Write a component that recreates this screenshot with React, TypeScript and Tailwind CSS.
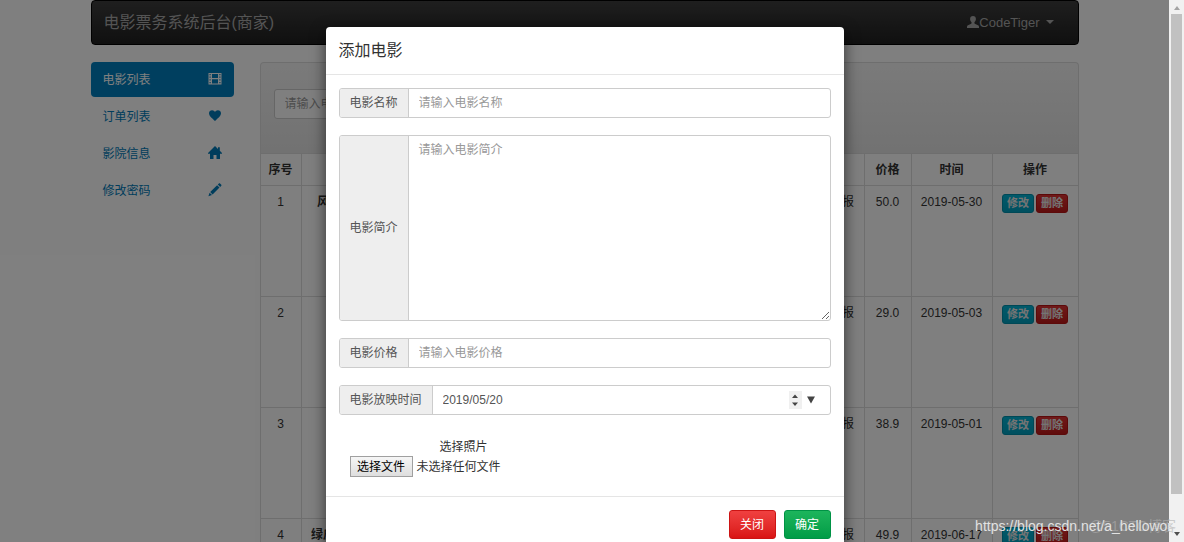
import type { ReactNode } from 'react';

interface Movie {
  id: number;
  name: string;
  price: string;
  date: string;
}

const movies: Movie[] = [
  { id: 1, name: '风暴', price: '50.0', date: '2019-05-30' },
  { id: 2, name: '', price: '29.0', date: '2019-05-03' },
  { id: 3, name: '', price: '38.9', date: '2019-05-01' },
  { id: 4, name: '绿皮书', price: '49.9', date: '2019-06-17' },
];

const FilmIcon = () => (
  <svg className="h-3.5 w-3.5" viewBox="0 0 14 14" fill="currentColor" aria-hidden="true">
    <path
      fillRule="evenodd"
      d="M.5 1h13v11.500H.5zM1.500 2v1.200h1.200V2zm0 2.500v1.200h1.200V4.500zm0 2.700v1.200h1.200V7.200zm0 2.700v1.300h1.200V9.900zM4 2v4h6V2zm0 5.300v4.200h6V7.300zM11.300 2v1.200h1.200V2zm0 2.500v1.200h1.200V4.500zm0 2.700v1.200h1.200V7.200zm0 2.700v1.300h1.200V9.900z"
    />
  </svg>
);

const HeartIcon = () => (
  <svg className="h-3.5 w-3.5" viewBox="0 0 14 14" fill="currentColor" aria-hidden="true">
    <path d="M7 12C4.900 9.700 1 7.200 1 4.200 1 2.400 2.400 1.200 4.100 1.200c1.300 0 2.300.7 2.900 1.900.6-1.200 1.600-1.900 2.900-1.900 1.700 0 3.100 1.200 3.100 3 0 3-3.900 5.500-6 7.800z" />
  </svg>
);

const HomeIcon = () => (
  <svg className="h-3.5 w-3.5" viewBox="0 0 14 14" fill="currentColor" aria-hidden="true">
    <path d="M7 0l3 3V1.300h1.800v3.500L14 7v.8h-2V13H8.500V9h-3v4H2V7.800H0V7z" />
  </svg>
);

const PencilIcon = () => (
  <svg className="h-3.5 w-3.5" viewBox="0 0 14 14" fill="currentColor" aria-hidden="true">
    <path d="M10.900.4c.3-.3.8-.3 1.100 0l1.300 1.300c.3.300.3.800 0 1.100l-1.100 1.100-2.400-2.400zM9.100 2.200l2.400 2.400-6.900 6.900-2.400-2.400zM1.600 9.700l2.400 2.400L.4 13.300z" />
  </svg>
);

const UserIcon = () => (
  <svg className="h-3 w-3" viewBox="0 0 12 12" fill="currentColor" aria-hidden="true">
    <path d="M6 0c1.900 0 2.900 1.200 2.900 3 0 1.400-.6 2.500-1.300 3.100-.3.400-.3 1.400.2 1.700l3.200 1.500c.7.300 1 .8 1 1.500V12H0v-1.200c0-.7.3-1.200 1-1.500l3.200-1.500c.5-.3.500-1.300.2-1.700C3.700 5.500 3.100 4.400 3.100 3c0-1.800 1-3 2.900-3z" />
  </svg>
);

const menu: { label: string; icon: ReactNode; active?: boolean }[] = [
  { label: '电影列表', icon: <FilmIcon />, active: true },
  { label: '订单列表', icon: <HeartIcon /> },
  { label: '影院信息', icon: <HomeIcon /> },
  { label: '修改密码', icon: <PencilIcon /> },
];

const Navbar = () => (
  <nav className="flex h-[45px] items-center justify-between rounded border border-black bg-linear-to-b from-[#3e3e3e] to-[#202020] pr-6 pl-3 text-[#a8a8a8]">
    <a href="#" className="text-base">电影票务系统后台(商家)</a>
    <button type="button" className="flex items-center text-[13px]">
      <UserIcon />
      CodeTiger
      <svg className="ml-1.5 h-1 w-2" viewBox="0 0 8 4" fill="currentColor" aria-hidden="true">
        <path d="M0 0h8L4 4z" />
      </svg>
    </button>
  </nav>
);

const Sidebar = () => (
  <ul className="flex w-[143px] shrink-0 flex-col gap-0.5">
    {menu.map(({ label, icon, active }) => (
      <li key={label}>
        <a
          href="#"
          className={`flex h-[35px] items-center justify-between rounded px-3 ${
            active ? 'bg-[#007fbe] text-white' : 'text-[#007ab8]'
          }`}
        >
          {label}
          <span className="pb-0.5">{icon}</span>
        </a>
      </li>
    ))}
  </ul>
);

const MovieTable = () => (
  <table className="w-full table-fixed border-collapse text-center text-[#333] [&_td]:border [&_td]:border-[#ddd] [&_td]:pt-2 [&_td]:align-top [&_th]:border [&_th]:border-[#ddd]">
    <thead>
      <tr className="h-8">
        <th className="w-[41px]">序号</th>
        <th className="w-14" aria-label="名称"></th>
        <th>简介</th>
        <th className="w-[68px]" aria-label="海报"></th>
        <th className="w-[47px]">价格</th>
        <th className="w-[81px]">时间</th>
        <th className="w-[86px]">操作</th>
      </tr>
    </thead>
    <tbody>
      {movies.map((movie) => (
        <tr key={movie.id} className="h-[111px]">
          <td>{movie.id}</td>
          <td className="font-bold">{movie.name}</td>
          <td></td>
          <td>查看海报</td>
          <td>{movie.price}</td>
          <td>{movie.date}</td>
          <td>
            <div className="flex justify-center gap-0.5 text-[11px] font-bold text-[#e8e8e8]">
              <button type="button" className="h-[19px] w-8 rounded-[3px] border border-[#0090ac] bg-linear-to-b from-[#00b4d6] to-[#009fbe]">
                修改
              </button>
              <button type="button" className="h-[19px] w-8 rounded-[3px] border border-[#b91515] bg-linear-to-b from-[#e03232] to-[#c01818]">
                删除
              </button>
            </div>
          </td>
        </tr>
      ))}
    </tbody>
  </table>
);

interface FieldProps {
  id: string;
  label: string;
  children: ReactNode;
}

const Field = ({ id, label, children }: FieldProps) => (
  <div className="flex min-h-[30px] overflow-hidden rounded-[3px] border border-[#ccc]">
    <label htmlFor={id} className="flex shrink-0 items-center border-r border-[#ccc] bg-[#eee] px-2.5 text-[#555]">
      {label}
    </label>
    {children}
  </div>
);

const AddMovieModal = () => (
  <div className="absolute inset-0 flex items-start justify-center overflow-hidden bg-black/50 pt-[27px]">
    <div role="dialog" aria-label="添加电影" className="w-full max-w-[518px] rounded-t bg-white pb-4 shadow-[0_5px_15px_rgba(0,0,0,0.6)]">
      <div className="flex h-12 items-center border-b border-[#e5e5e5] px-[13px]">
        <h4 className="text-base">添加电影</h4>
      </div>
      <form>
        <div className="flex flex-col gap-[17px] px-[13px] pt-[13px]">
          <Field id="name" label="电影名称">
            <input id="name" type="text" placeholder="请输入电影名称" className="min-w-0 flex-1 px-2.5 placeholder:text-[#999]" />
          </Field>
          <Field id="intro" label="电影简介">
            <textarea id="intro" placeholder="请输入电影简介" className="h-[184px] min-w-0 flex-1 resize-y px-2.5 py-1.5 placeholder:text-[#999]" />
          </Field>
          <Field id="price" label="电影价格">
            <input id="price" type="text" placeholder="请输入电影价格" className="min-w-0 flex-1 px-2.5 placeholder:text-[#999]" />
          </Field>
          <Field id="time" label="电影放映时间">
            <input id="time" type="text" defaultValue="2019/05/20" className="min-w-0 flex-1 px-2.5 text-[#555]" />
            <div className="flex items-center gap-1 pr-3.5">
              <button type="button" aria-label="调整日期" className="flex h-[18px] w-[13px] items-center justify-center bg-[#f0f0f0] text-[#444]">
                <svg className="h-3 w-2" viewBox="0 0 8 12" fill="currentColor" aria-hidden="true">
                  <path d="M1 4l3-3.500L7 4zM1 8.500h6L4 12z" />
                </svg>
              </button>
              <button type="button" aria-label="打开日历" className="text-[#444]">
                <svg className="h-2 w-2.5" viewBox="0 0 10 8" fill="currentColor" aria-hidden="true">
                  <path d="M1 .5h8L5 7.500z" />
                </svg>
              </button>
            </div>
          </Field>
        </div>
        <div className="px-6 pt-[22px] pb-[19px] text-[#333]">
          <label htmlFor="photo" className="block h-[19px] pl-[90px] leading-5">选择照片</label>
          <div className="flex items-center gap-1">
            <input id="photo" type="file" className="sr-only" />
            <label htmlFor="photo" className="flex h-[21px] w-[63px] items-center justify-center border border-[#a0a0a0] bg-linear-to-b from-[#f6f6f6] to-[#dedede] text-black">
              选择文件
            </label>
            <span>未选择任何文件</span>
          </div>
        </div>
        <div className="flex justify-end gap-2 border-t border-[#e5e5e5] px-[13px] pt-[13px] text-white">
          <button type="button" className="h-[29px] w-[47px] rounded-[3px] border border-[#cc1414] bg-linear-to-b from-[#f04040] to-[#d91313]">
            关闭
          </button>
          <button type="submit" className="h-[29px] w-[47px] rounded-[3px] border border-[#009245] bg-linear-to-b from-[#1cb55c] to-[#009c46]">
            确定
          </button>
        </div>
      </form>
    </div>
  </div>
);

const Scrollbar = () => (
  <div className="flex w-[15px] shrink-0 flex-col items-center gap-1 bg-[#f1f1f1] py-1.5" aria-hidden="true">
    <svg className="h-1 w-1.5" viewBox="0 0 6 4" fill="#a3a3a3">
      <path d="M0 4h6L3 0z" />
    </svg>
    <div className="w-[11px] flex-1">
      <div className="h-14/15 bg-[#c1c1c1]" />
    </div>
    <svg className="h-1 w-1.5" viewBox="0 0 6 4" fill="#505050">
      <path d="M0 0h6L3 4z" />
    </svg>
  </div>
);

const App = () => {
  return (
    <div className="relative flex h-screen overflow-hidden bg-white font-['Liberation_Sans','Noto_Sans_CJK_SC',sans-serif] text-xs text-[#333]">
      <main className="relative min-w-0 flex-1 overflow-hidden">
        <div className="mx-auto max-w-[988px]">
          <Navbar />
          <div className="flex gap-[26px] pt-[17px]">
            <Sidebar />
            <section className="min-w-0 flex-1">
              <div className="h-[91px] rounded-t border border-b-0 border-[#ddd] bg-linear-to-b from-[#f5f5f5] to-[#e4e4e4] px-[13px] pt-[26px]">
                <input
                  type="text"
                  aria-label="搜索电影"
                  placeholder="请输入电影名称"
                  className="h-[30px] w-44 rounded-[3px] border border-[#ccc] bg-white px-2.5 placeholder:text-[#999]"
                />
              </div>
              <MovieTable />
            </section>
          </div>
        </div>
        <AddMovieModal />
      </main>
      <Scrollbar />
      <div className="pointer-events-none absolute right-2 bottom-1.5 text-sm text-[#b0b0b0]/60">@51CTO博客</div>
      <div className="pointer-events-none absolute right-3 bottom-1.5 text-sm text-[#e2e2e2]">https://blog.csdn.net/a_hellowor</div>
    </div>
  );
};

export default App;
